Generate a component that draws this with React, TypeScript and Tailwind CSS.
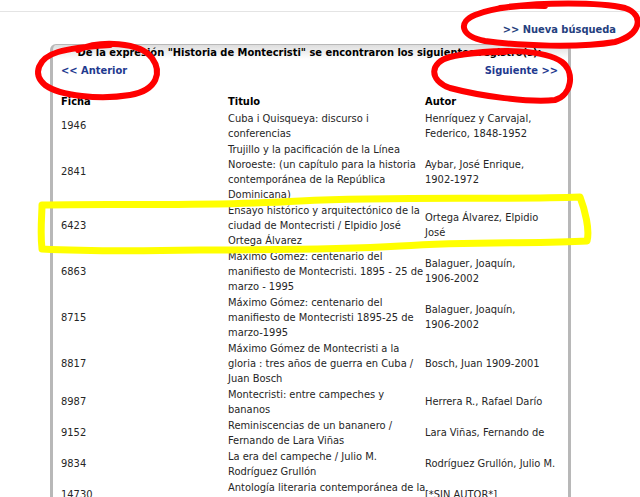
import React from "react";

type Row = { ficha: string; title: string[]; author: string[] };

const rows: Row[] = [
  { ficha: "1946", title: ["Cuba i Quisqueya: discurso i", "conferencias"], author: ["Henríquez y Carvajal,", "Federico, 1848-1952"] },
  {
    ficha: "2841",
    title: ["Trujillo y la pacificación de la Línea", "Noroeste: (un capítulo para la historia", "contemporánea de la República", "Dominicana)"],
    author: ["Aybar, José Enrique,", "1902-1972"],
  },
  {
    ficha: "6423",
    title: ["Ensayo histórico y arquitectónico de la", "ciudad de Montecristi / Elpidio José", "Ortega Álvarez"],
    author: ["Ortega Álvarez, Elpidio", "José"],
  },
  {
    ficha: "6863",
    title: ["Máximo Gómez: centenario del", "manifiesto de Montecristi. 1895 - 25 de", "marzo - 1995"],
    author: ["Balaguer, Joaquín,", "1906-2002"],
  },
  {
    ficha: "8715",
    title: ["Máximo Gómez: centenario del", "manifiesto de Montecristi 1895-25 de", "marzo-1995"],
    author: ["Balaguer, Joaquín,", "1906-2002"],
  },
  {
    ficha: "8817",
    title: ["Máximo Gómez de Montecristi a la", "gloria : tres años de guerra en Cuba /", "Juan Bosch"],
    author: ["Bosch, Juan 1909-2001"],
  },
  { ficha: "8987", title: ["Montecristi: entre campeches y", "bananos"], author: ["Herrera R., Rafael Darío"] },
  { ficha: "9152", title: ["Reminiscencias de un bananero /", "Fernando de Lara Viñas"], author: ["Lara Viñas, Fernando de"] },
  { ficha: "9834", title: ["La era del campeche / Julio M.", "Rodríguez Grullón"], author: ["Rodríguez Grullón, Julio M."] },
  { ficha: "14730", title: ["Antología literaria contemporánea de la", "frontera"], author: ["[*SIN AUTOR*]"] },
];

function Lines({ lines }: { lines: string[] }) {
  return (
    <div>
      {lines.map((l, i) => (
        <div key={i} className="whitespace-nowrap">
          {l}
        </div>
      ))}
    </div>
  );
}

// the hand-drawn marks over the screenshot
function Marks() {
  return (
    <svg className="pointer-events-none absolute left-0 top-0" width="640" height="497" viewBox="0 0 640 497" fill="none">
      <g stroke="#ff0000" strokeWidth="6" strokeLinecap="round" strokeLinejoin="round">
        <path d="M500 8 C540 2 600 2 625 8 C645 15 641 35 615 42 C580 48 520 46 485 41 C460 36 458 22 475 15 C490 9 515 5 545 6" />
        <path d="M78 50 C100 40 140 42 152 58 C162 72 158 90 130 95 C100 100 60 96 45 85 C32 74 38 58 58 52 C75 47 95 46 110 45" />
        <path d="M460 55 C500 48 545 50 562 62 C575 72 572 95 555 100 C530 103 480 96 450 88 C428 80 430 62 450 57 C470 52 490 52 505 52" />
      </g>
      <path
        d="M42 205 C120 203 200 207 300 201 C400 196 500 200 580 197 C585 210 590 230 587 241 C540 244 480 241 400 246 C330 250 260 250 200 250 C150 251 80 251 42 249 C40 232 42 215 42 205 Z"
        stroke="#ffff00"
        strokeWidth="7"
        strokeLinejoin="round"
      />
    </svg>
  );
}

export default function App() {
  return (
    <div className="relative h-[497px] w-[640px] overflow-hidden bg-white font-['DejaVu_Sans_Condensed','DejaVu_Sans',sans-serif] text-[11px] leading-[15px] text-[#262626]">
      <div className="h-[12px] border-b border-[#e4e4e4]" />
      <div className="mt-[10px] pr-[24px] text-right font-bold text-[#24407e]">&gt;&gt; Nueva búsqueda</div>

      <div className="ml-[50px] mt-[7px] h-[500px] w-[521px] rounded-t-[6px] border-x-[3px] border-t border-[#b8b8b8] bg-[linear-gradient(to_bottom,#dedede,#ffffff_14px)] pl-[8px] pr-[10px]">
        <div className="text-center font-bold text-black">
          De la expresión "Historia de Montecristi" se encontraron los siguientes registro(s):
        </div>
        <div className="mt-[3px] flex justify-between font-bold text-[#1f3a8f]">
          <span>&lt;&lt; Anterior</span>
          <span>Siguiente &gt;&gt;</span>
        </div>

        <div className="mt-[16px] grid grid-cols-[167px_197px_1fr] font-bold text-black">
          <div>Ficha</div>
          <div>Titulo</div>
          <div>Autor</div>
        </div>

        <div className="mt-[1.5px] flex flex-col gap-[1px]">
          {rows.map((r) => (
            <div key={r.ficha} className="grid grid-cols-[167px_197px_1fr] items-center">
              <div>{r.ficha}</div>
              <Lines lines={r.title} />
              <Lines lines={r.author} />
            </div>
          ))}
        </div>
      </div>

      <Marks />
    </div>
  );
}
